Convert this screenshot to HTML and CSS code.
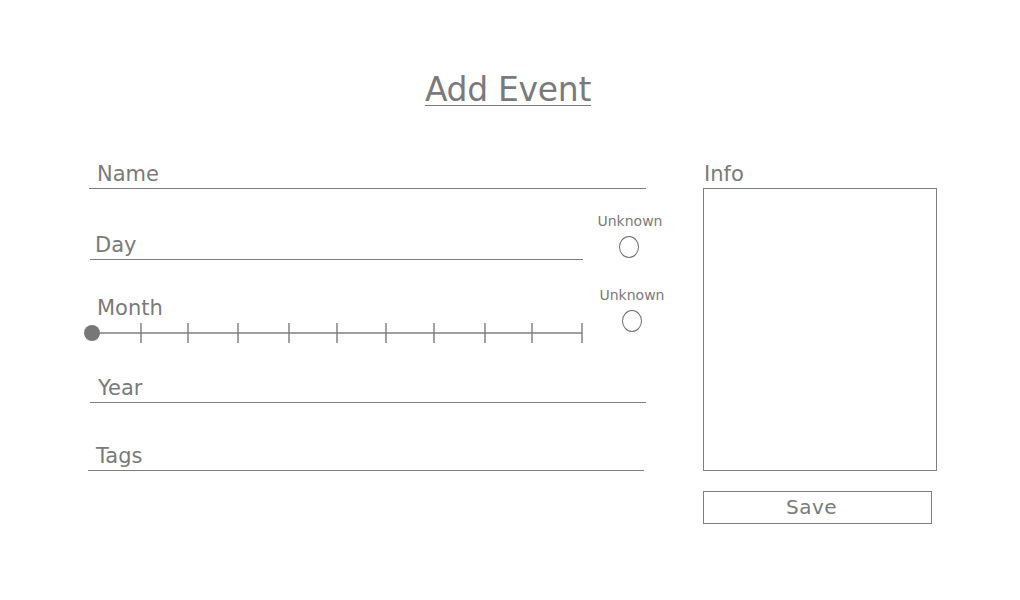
FILE: index.html
```html
<!DOCTYPE html>
<html lang="en">
<head>
    <meta charset="UTF-8">
    <title>Add Event</title>
    <link rel="stylesheet" href="styles.css">
</head>
<body>
<div class="page">
    <h1 class="title">Add Event</h1>
    <div class="form">
        <div class="left">
            <div class="field field-name">Name</div>
            <div class="row row-day">
                <div class="field field-day">Day</div>
                <div class="unknown">
                    <span class="unknown-text">Unknown</span>
                    <span class="radio"></span>
                </div>
            </div>
            <div class="row row-month">
                <div class="month">
                    <div class="month-label">Month</div>
                    <svg class="slider" width="500" height="24" viewBox="0 0 500 24">
                        <line x1="8" y1="12" x2="499" y2="12" stroke="#808080" stroke-width="1.4"/>
                        <g stroke="#7a7a7a" stroke-width="1.4">
                            <line x1="58" y1="2" x2="58" y2="22"/>
                            <line x1="105" y1="2" x2="105" y2="22"/>
                            <line x1="155" y1="2" x2="155" y2="22"/>
                            <line x1="206" y1="2" x2="206" y2="22"/>
                            <line x1="254" y1="2" x2="254" y2="22"/>
                            <line x1="303" y1="2" x2="303" y2="22"/>
                            <line x1="351" y1="2" x2="351" y2="22"/>
                            <line x1="402" y1="2" x2="402" y2="22"/>
                            <line x1="449" y1="2" x2="449" y2="22"/>
                            <line x1="499" y1="2" x2="499" y2="22"/>
                        </g>
                        <circle cx="9" cy="12" r="8" fill="#777"/>
                    </svg>
                </div>
                <div class="unknown unknown-month">
                    <span class="unknown-text">Unknown</span>
                    <span class="radio"></span>
                </div>
            </div>
            <div class="field field-year">Year</div>
            <div class="field field-tags">Tags</div>
        </div>
        <div class="right">
            <div class="info-label">Info</div>
            <div class="info-box"></div>
            <div class="save">Save</div>
        </div>
    </div>
</div>
</body>
</html>
```

FILE: styles.css
```css
*{
    margin: 0;
    padding: 0;
    box-sizing: border-box;
}
html,body{
    width: 100%;
    height: 100%;
    background: #fff;
}
body{
    font-family: "DejaVu Sans", "Liberation Sans", sans-serif;
    color: #7a7a7a;
}
.title{
    padding-top: 70px;
    padding-right: 4px;
    font-size: 33px;
    line-height: 40px;
    font-weight: normal;
    text-align: center;
    letter-spacing: -0.3px;
    text-decoration: underline;
    text-decoration-thickness: 1px;
    text-underline-offset: 4px;
}
.form{
    display: flex;
    margin-top: 50px;
    padding-left: 88px;
}
.left{
    width: 580px;
    flex-shrink: 0;
}
.field{
    flex-shrink: 0;
    height: 29px;
    font-size: 21px;
    line-height: 28px;
    padding-left: 8px;
    border-bottom: 1px solid #808080;
}
.field-name{
    width: 557px;
    margin-left: 1px;
}
.row{
    display: flex;
}
.row-day{
    height: 71px;
    align-items: flex-end;
}
.field-day{
    width: 493px;
    margin-left: 2px;
    padding-left: 5px;
}
.unknown{
    flex-shrink: 0;
    display: flex;
    flex-direction: column;
    align-items: center;
    width: 66px;
    margin-left: 14px;
    margin-bottom: 2px;
}
.unknown-text{
    font-size: 14px;
    line-height: 16px;
    margin-bottom: 7px;
}
.radio{
    width: 20px;
    height: 22px;
    margin-right: 3px;
    border: 1px solid #6e6e6e;
    border-radius: 50%;
}
.row-month{
    height: 85px;
}
.month{
    flex-shrink: 0;
    width: 500px;
    margin-left: -5px;
    padding-top: 36px;
}
.month-label{
    font-size: 21px;
    line-height: 25px;
    padding-left: 14px;
}
.slider{
    display: block;
}
.unknown-month{
    align-self: flex-start;
    margin-top: 27px;
    margin-left: 16px;
    margin-bottom: 0;
}
.unknown-month .radio{
    margin-right: 1px;
}
.field-year{
    width: 556px;
    margin-top: 29px;
    margin-left: 2px;
}
.field-tags{
    width: 556px;
    margin-top: 39px;
}
.right{
    width: 234px;
    margin-left: 35px;
}
.info-label{
    font-size: 21px;
    line-height: 28px;
    padding-left: 1px;
}
.info-box{
    height: 283px;
    border: 1px solid #808080;
}
.save{
    width: 229px;
    height: 33px;
    margin-top: 20px;
    padding-right: 12px;
    border: 1px solid #808080;
    font-size: 20px;
    line-height: 31px;
    text-align: center;
    letter-spacing: 0.5px;
}
```
